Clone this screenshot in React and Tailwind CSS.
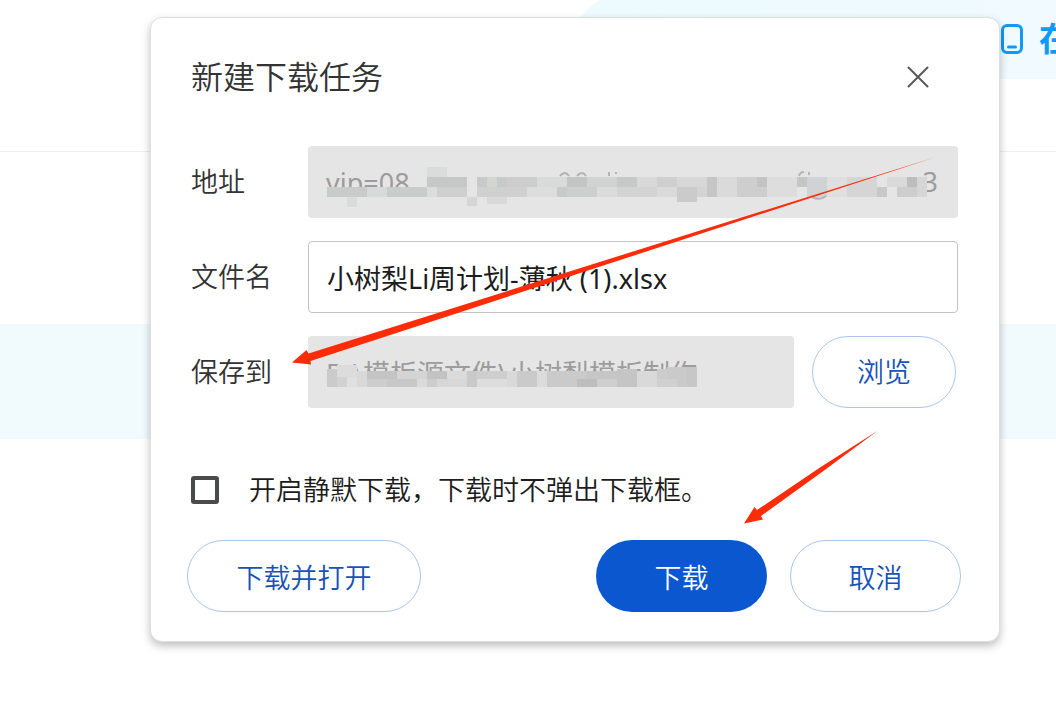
import { useState } from "react";

const outlineButton =
  "h-[72px] rounded-full border border-[#a9c5ef] bg-white text-[27px] text-[#1652b8] hover:bg-blue-50";

const fieldStyles =
  "h-[72px] w-full min-w-0 rounded-[4px] px-[18px] text-[27px] font-normal outline-none";

// [x, y, width, height, colour]
const addressBlocks = [
  [19, 41, 40, 10, "#c9cbca"],
  [39, 51, 10, 10, "#d9dbda"],
  [59, 41, 20, 10, "#d8dad9"],
  [79, 41, 40, 10, "#c9cccb"],
  [119, 21, 20, 10, "#dadcdb"],
  [119, 31, 40, 10, "#c6c8c7"],
  [119, 41, 10, 10, "#dadddc"],
  [129, 41, 30, 10, "#cecfce"],
  [159, 51, 10, 9, "#d4d5d4"],
  [169, 31, 10, 10, "#c8cac9"],
  [179, 31, 10, 10, "#d3d5d3"],
  [189, 31, 10, 10, "#c8cac9"],
  [199, 31, 30, 10, "#cccdcc"],
  [169, 41, 50, 10, "#cfd0cf"],
  [179, 51, 20, 7, "#d8d9d8"],
  [219, 41, 30, 10, "#dcdddc"],
  [229, 31, 30, 10, "#d9dbda"],
  [249, 41, 10, 10, "#c8cac9"],
  [259, 31, 20, 10, "#c3c5c4"],
  [259, 41, 30, 10, "#cdcfce"],
  [279, 31, 30, 10, "#d1d3d2"],
  [289, 41, 20, 10, "#dadbda"],
  [309, 31, 20, 10, "#c7c9c8"],
  [309, 41, 40, 10, "#d2d3d2"],
  [329, 31, 20, 10, "#d8d8d8"],
  [349, 31, 20, 10, "#cfcfcf"],
  [349, 41, 20, 10, "#dadada"],
  [369, 31, 30, 10, "#d7d7d7"],
  [369, 41, 20, 15, "#cbcbcb"],
  [389, 41, 10, 10, "#d3d3d3"],
  [399, 31, 10, 20, "#c6c6c6"],
  [409, 31, 30, 20, "#dadada"],
  [429, 31, 30, 20, "#cecece"],
  [449, 31, 10, 10, "#c3c3c3"],
  [459, 31, 30, 20, "#dddddd"],
  [489, 31, 10, 10, "#c4c5c5"],
  [499, 31, 20, 20, "#d0d2d3"],
  [519, 31, 20, 20, "#dfdfdf"],
  [539, 31, 30, 20, "#d5d5d5"],
  [569, 41, 10, 10, "#c8c8c8"],
  [579, 31, 20, 10, "#d9d9d9"],
  [589, 41, 20, 10, "#cdcdcd"],
  [599, 31, 10, 10, "#bdbdbd"],
  [609, 31, 10, 20, "#d6d6d6"],
];

const folderBlocks = [
  [19, 33, 10, 18, "#cbcbcb"],
  [29, 29, 20, 12, "#dcdcdc"],
  [29, 41, 10, 10, "#d2d2d2"],
  [39, 41, 10, 10, "#e0e0e0"],
  [49, 35, 10, 16, "#d8d8d8"],
  [59, 35, 30, 8, "#c4c4c4"],
  [59, 43, 20, 8, "#cdcdcd"],
  [79, 43, 30, 8, "#c8c8c8"],
  [89, 35, 30, 8, "#d4d4d4"],
  [109, 43, 10, 8, "#dadada"],
  [119, 35, 20, 8, "#c3c3c3"],
  [119, 43, 10, 8, "#cdcdcd"],
  [129, 43, 30, 8, "#d7d7d7"],
  [139, 35, 20, 8, "#dadada"],
  [159, 35, 10, 16, "#c9c9c9"],
  [169, 35, 30, 8, "#cecece"],
  [169, 43, 40, 8, "#dddddd"],
  [199, 35, 20, 16, "#d9d9d9"],
  [209, 35, 20, 16, "#cacaca"],
  [229, 35, 10, 16, "#dbdbdb"],
  [239, 35, 40, 16, "#cacaca"],
  [269, 43, 20, 8, "#bebebe"],
  [279, 35, 30, 8, "#c6c6c6"],
  [289, 43, 20, 8, "#cecece"],
  [309, 33, 20, 18, "#c5c5c5"],
  [329, 35, 20, 16, "#d9d9d9"],
  [349, 33, 10, 10, "#cccccc"],
  [359, 31, 30, 20, "#cacaca"],
  [349, 43, 20, 8, "#d0d0d0"],
  [379, 31, 10, 20, "#c7c7c7"],
];

function Mosaic({ blocks, children }) {
  return (
    <svg
      className="pointer-events-none absolute top-0 left-0 h-[72px] w-[650px]"
      viewBox="0 0 650 72"
      shapeRendering="crispEdges"
      aria-hidden="true"
    >
      {blocks.map(([x, y, width, height, fill]) => (
        <rect key={`${x}-${y}`} x={x} y={y} width={width} height={height} fill={fill} />
      ))}
      {children}
    </svg>
  );
}

function Backdrop() {
  return (
    <div className="min-h-screen overflow-hidden bg-white">
      <header className="flex h-[151px] items-start overflow-hidden">
        <div className="-mt-2 ml-[570px] flex h-[87px] flex-1 items-center justify-end rounded-tl-[60px] bg-linear-to-r from-[#edfbfe] to-[#f0faff] pt-1.5">
          <a href="#app" className="-mr-4 flex items-center gap-4 text-[#1299f3]">
            <svg width="22" height="30" viewBox="0 0 22 30" fill="none" stroke="currentColor" strokeWidth="3">
              <rect x="1.5" y="1.5" width="19" height="27" rx="4.5" />
              <path d="M7.500 23h7" strokeLinecap="round" />
            </svg>
            <span className="text-[33px] leading-[40px] font-bold">在</span>
          </a>
        </div>
      </header>
      <hr className="border-[#eeeeee]" />
      <div className="mt-[172px] h-[115px] bg-[#f1fafd]" />
    </div>
  );
}

function Arrows() {
  return (
    <svg
      className="pointer-events-none absolute -top-px -left-px h-[625px] w-[849px]"
      viewBox="150 17 849 625"
      fill="#fc2c08"
      aria-hidden="true"
    >
      <path d="M292 362.500 306.500 350 308.500 353.500 700 230.500 936 157 700 234 310.500 361 311 364.500Z" />
      <path d="M744 523.500 754.500 507 757 510 820 467.500 878 430.500 822 472 761 516 763 519.500Z" />
    </svg>
  );
}

export default function App() {
  const [fileName, setFileName] = useState("小树梨Li周计划-薄秋 (1).xlsx");
  const [silent, setSilent] = useState(false);

  return (
    <div className="relative font-['Noto_Sans','Noto_Sans_CJK_SC',sans-serif] text-[#333333]">
      <Backdrop />

      <div className="absolute inset-x-0 top-0 pt-[17px] pr-[56px] pl-[150px]">
        <section
          role="dialog"
          aria-labelledby="dialog-title"
          className="relative rounded-[12px] border border-[#dcdfe0] bg-white pr-[38px] pb-[29px] pl-9 font-[350] shadow-[0_4px_8px_rgba(0,0,0,0.25)]"
        >
          <div className="flex h-32 items-start justify-between px-1 pt-[35px]">
            <h1 id="dialog-title" className="text-[32px] leading-[48px] font-[350]">
              新建下载任务
            </h1>
            <button type="button" aria-label="关闭" className="mr-[15px] flex size-12 items-center justify-center text-[#58595b]">
              <svg width="22" height="22" viewBox="0 0 22 22" stroke="currentColor" strokeWidth="2" strokeLinecap="round">
                <path d="M1.500 1.500l19 19M20.500 1.500l-19 19" />
              </svg>
            </button>
          </div>

          <div className="flex flex-col gap-[23px] pr-[3px] pl-1 text-[27px]">
            <div className="flex items-center">
              <label htmlFor="address" className="w-[117px] shrink-0">
                地址
              </label>
              <div className="relative flex flex-1 items-center rounded-[4px] bg-[#e5e5e5]">
                <input id="address" readOnly value="vip=08" className={`${fieldStyles} text-[#9c9c9c]`} />
                <Mosaic blocks={addressBlocks}>
                  <g fill="none" stroke="#b4b4b4" strokeWidth="2" shapeRendering="auto">
                    <path d="M252 30q5-6 9 0M269 30q5-6 9 0M301 26v4M308 26v2M491 30q1-4 5-4M501 26v3M504 51q8 4 14-1" />
                  </g>
                </Mosaic>
                <span className="pr-5 font-normal text-[#9c9c9c]">3</span>
              </div>
            </div>

            <div className="flex items-center">
              <label htmlFor="filename" className="w-[117px] shrink-0">
                文件名
              </label>
              <input
                id="filename"
                value={fileName}
                onChange={(e) => setFileName(e.target.value)}
                className={`${fieldStyles} border border-[#c4c4c4] bg-white text-[#1c1c1c]`}
              />
            </div>

            <div className="flex items-center">
              <label htmlFor="folder" className="w-[117px] shrink-0">
                保存到
              </label>
              <div className="relative flex-1 overflow-hidden rounded-[4px] bg-[#e5e5e5]">
                <input
                  id="folder"
                  readOnly
                  value="D:\模板源文件\小树梨模板制作"
                  className={`${fieldStyles} text-[#9c9c9c]`}
                />
                <Mosaic blocks={folderBlocks} />
              </div>
              <button type="button" className={`${outlineButton} mr-0.5 ml-[18px] w-36`}>
                浏览
              </button>
            </div>
          </div>

          <div className="mt-[60px] flex h-11 items-center gap-[30px] px-1">
            <input
              id="silent"
              type="checkbox"
              checked={silent}
              onChange={(e) => setSilent(e.target.checked)}
              className="size-7 appearance-none rounded-[3px] border-4 border-[#4a4b4b] bg-white checked:bg-[#0b57d0]"
            />
            <label htmlFor="silent" className="text-[27px] leading-[44px] text-[#1c1c1c]">
              开启静默下载，下载时不弹出下载框。
            </label>
          </div>

          <div className="mt-7 flex items-center gap-[23px]">
            <button type="button" className={`${outlineButton} mr-auto w-[234px] pt-1`}>
              下载并打开
            </button>
            <button
              type="button"
              className="h-[72px] w-[171px] rounded-full bg-[#0b57d0] pt-1 text-[27px] text-white hover:bg-[#0a4db8]"
            >
              下载
            </button>
            <button type="button" className={`${outlineButton} w-[171px] pt-1`}>
              取消
            </button>
          </div>

          <Arrows />
        </section>
      </div>
    </div>
  );
}
